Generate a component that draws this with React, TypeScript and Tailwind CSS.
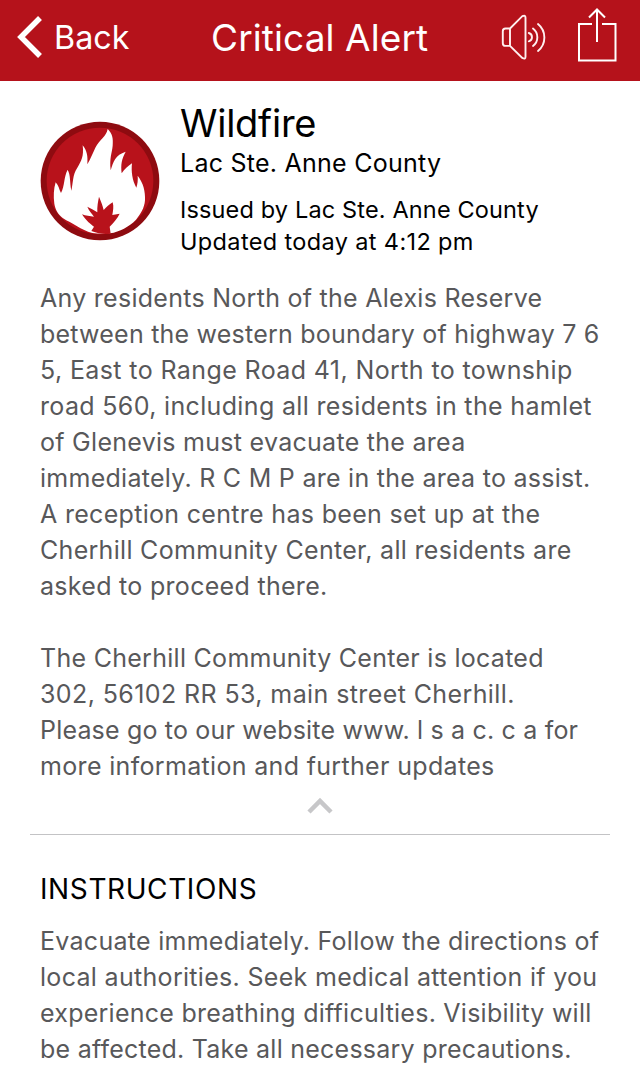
import React from "react";

type Line = { text: string; tracking: string };

const description: Line[] = [
  { text: "Any residents North of the Alexis Reserve", tracking: "tracking-[0.275px]" },
  { text: "between the western boundary of highway 7 6", tracking: "tracking-[0.22px]" },
  { text: "5, East to Range Road 41, North to township", tracking: "tracking-[0.39px]" },
  { text: "road 560, including all residents in the hamlet", tracking: "tracking-[0.34px]" },
  { text: "of Glenevis must evacuate the area", tracking: "tracking-[0.28px]" },
  { text: "immediately. R C M P are in the area to assist.", tracking: "tracking-[0.27px]" },
  { text: "A reception centre has been set up at the", tracking: "tracking-[0.31px]" },
  { text: "Cherhill Community Center, all residents are", tracking: "tracking-[0.3px]" },
  { text: "asked to proceed there.", tracking: "tracking-[0.3px]" },
];

const location: Line[] = [
  { text: "The Cherhill Community Center is located", tracking: "tracking-[0.28px]" },
  { text: "302, 56102 RR 53, main street Cherhill.", tracking: "tracking-[0.4px]" },
  { text: "Please go to our website www. l s a c. c a for", tracking: "tracking-[0.18px]" },
  { text: "more information and further updates", tracking: "tracking-[0.33px]" },
];

const instructions: Line[] = [
  { text: "Evacuate immediately. Follow the directions of", tracking: "tracking-[0.28px]" },
  { text: "local authorities. Seek medical attention if you", tracking: "tracking-[0.31px]" },
  { text: "experience breathing difficulties. Visibility will", tracking: "tracking-[0.25px]" },
  { text: "be affected. Take all necessary precautions.", tracking: "tracking-[0.24px]" },
];

const Paragraph = ({ lines }: { lines: Line[] }) => (
  <p className="text-[25px] leading-9 text-[#58585a]">
    {lines.map((line) => (
      <span key={line.text} className={`block whitespace-nowrap ${line.tracking}`}>
        {line.text}
      </span>
    ))}
  </p>
);

const BackIcon = () => (
  <svg width="28" height="44" viewBox="0 0 28 44" fill="none" stroke="white" strokeWidth="5.5" className="mt-[15px]">
    <path d="M24 3 5 22l19 19" />
  </svg>
);

const SpeakerIcon = () => (
  <svg width="48" height="46" viewBox="501 14 48 46" fill="none" stroke="#fff0f0" strokeWidth="1.9" className="mt-[14px]">
    <path d="M510 28.500h-4.500q-2.700 0-2.700 2.700v12q0 2.700 2.700 2.700h4.500ZM510 28.500 522.300 16.200q3.200-1.500 3.200 1.500v39q0 3-3.200 1.200L510 45.900" />
    <path
      d="M528.800 33a4.300 4.300 0 0 1 0 8.300M533 28.500a11 11 0 0 1 0 17.500M538 24a17.500 17.500 0 0 1 0 27"
      strokeLinecap="round"
    />
  </svg>
);

const ShareIcon = () => (
  <svg width="42" height="56" viewBox="576 7 42 56" fill="none" stroke="white" strokeWidth="2" className="ml-[27px] mt-[7px]">
    <path d="M592 24h-13v36.500h36.500V24H602M597 42V10M589 17.500l8-8 8 8" />
  </svg>
);

const WildfireIcon = () => (
  <svg width="120" height="120" viewBox="30 33 360 360" className="shrink-0">
    <circle cx="210" cy="213" r="178" fill="#8e0b10" />
    <circle cx="210" cy="213" r="160" fill="#b8121b" />
    <path
      fill="white"
      d="M77 217C86 226 87 238 93 249C105 226 101 201 113 179C122 196 119 213 124 242C130 216 127 196 142 173C154 153 162 139 158 106C171 122 174 138 172 163C182 146 188 130 196 113C208 89 229 80 233 57C247 70 250 85 248 107C246 129 238 143 242 181C250 154 256 135 287 125C275 147 272 163 275 190C284 177 293 169 306 160C303 184 307 212 319 233C323 221 324 210 323 197C340 219 346 243 345 271C343 295 332 312 318 329C296 351 270 365 240 370C220 372 202 371 187 369C169 364 156 358 140 348C127 339 112 334 98 324C84 312 76 300 73 281C70 258 71 237 77 217Z"
    />
    <path
      fill="#b8121b"
      d="M207 260C213 274 218 287 221 300C230 290 237 284 248 277C252 290 249 304 247 315L269 311C262 325 251 338 239 350L242 371C220 373 205 371 184 363L192 350C182 343 168 332 156 313C167 318 180 318 192 320C186 310 177 303 172 290C181 295 192 300 202 307C201 290 204 275 207 260Z"
    />
  </svg>
);

const ChevronUp = () => (
  <svg width="26" height="18" viewBox="0 0 26 18" fill="none" stroke="#c7c7c9" strokeWidth="4.5" className="mt-[13px]">
    <path d="m2 15 11-11 11 11" />
  </svg>
);

const App: React.FC = () => {
  return (
    <div className="h-[1088px] w-[640px] overflow-hidden bg-white font-['Inter','Liberation_Sans',sans-serif]">
      <header className="flex h-[81px] items-start bg-[#b5121b] text-white">
        <button className="flex w-[211px] items-start pl-4">
          <BackIcon />
          <span className="ml-[10px] mt-[18px] text-[32.3px] leading-10">Back</span>
        </button>
        <h1 className="mt-[15px] w-[290px] whitespace-nowrap text-[37px] leading-[46px] tracking-[0.1px]">
          Critical Alert
        </h1>
        <SpeakerIcon />
        <ShareIcon />
      </header>

      <main>
        <section className="flex pl-10">
          <div className="mt-10">
            <WildfireIcon />
          </div>
          <div className="ml-5 whitespace-nowrap text-black">
            <h2 className="mt-[19px] text-[38px] leading-[46px] tracking-[-0.25px]">Wildfire</h2>
            <p className="mt-px text-[25px] leading-8 tracking-[0.25px]">Lac Ste. Anne County</p>
            <p className="mt-[15px] text-[23.5px] leading-8 tracking-[0.15px]">Issued by Lac Ste. Anne County</p>
            <p className="text-[23.5px] leading-8 tracking-[0.36px]">Updated today at 4:12 pm</p>
          </div>
        </section>

        <section className="mt-[22px] pl-10">
          <Paragraph lines={description} />
          <div className="h-9" />
          <Paragraph lines={location} />
        </section>

        <div className="mx-[30px] flex h-[51px] justify-center border-b border-[#c3c3c5]">
          <ChevronUp />
        </div>

        <section className="pl-10 pt-9">
          <h3 className="text-[28px] leading-9 tracking-[0.6px] text-black">INSTRUCTIONS</h3>
          <div className="mt-4">
            <Paragraph lines={instructions} />
          </div>
        </section>
      </main>
    </div>
  );
};

export default App;
